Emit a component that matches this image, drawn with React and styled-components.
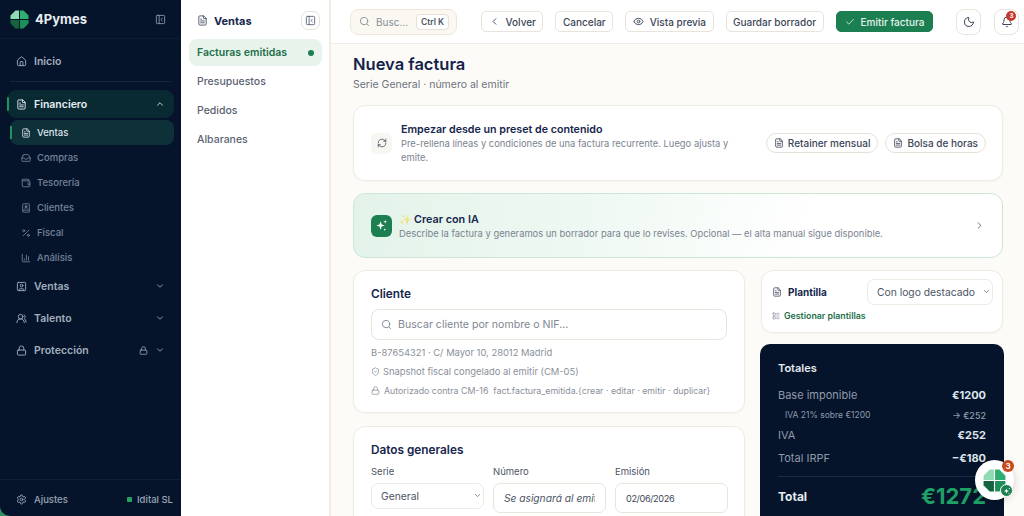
import React from 'react';
import styled, { createGlobalStyle } from 'styled-components';
import {
  House, FileText, Inbox, Wallet, BookUser, Percent, ChartColumn, ChevronDown, ChevronUp,
  SquareUser, UsersRound, Lock, Settings, Search, ChevronLeft, ChevronRight, Eye, Check, Moon, Bell,
  RefreshCw, ShieldCheck, PanelLeftClose, LayoutList,
} from 'lucide-react';

const GlobalStyle = createGlobalStyle`
  * { box-sizing: border-box; }
  html, body { margin: 0; height: 100%; overflow: hidden; }
  body { font-family: Inter, "Noto Sans", sans-serif; background: #fdfbf7; }
`;

const Shell = styled.div`
  display: flex;
  width: 1024px;
  height: 516px;
  overflow: hidden;
  position: relative;
  background: #2f8f63;
`;

const Sidebar = styled.aside`
  width: 181px;
  flex: none;
  display: flex;
  flex-direction: column;
  background: #05142b;
  color: #a8b3c2;
  border-bottom-left-radius: 10px;
`;

const Brand = styled.div`
  height: 39px;
  display: flex;
  align-items: center;
  gap: 6px;
  padding: 0 15px 0 10px;
  border-bottom: 1px solid #0b1c35;
`;

const BrandName = styled.span`
  flex: 1;
  font-size: 13px;
  font-weight: 700;
  color: #e8edf2;
`;

const Nav = styled.nav`
  flex: 1;
  display: flex;
  flex-direction: column;
  padding-top: 9px;
`;

const NavRow = styled.div`
  height: 26px;
  display: flex;
  align-items: center;
  gap: 7px;
  margin: 0 7px 6px;
  padding: 0 9px 0 9px;
  font-size: 10.5px;
  font-weight: 600;
  color: #a3aebd;
`;

const NavLabel = styled.span`
  flex: 1;
`;

const Divider = styled.div`
  height: 1px;
  margin: 1px 10px 8px;
  background: #14263f;
`;

const GroupRow = styled(NavRow)`
  position: relative;
  height: 28px;
  margin-bottom: 2px;
  border-radius: 9px;
  background: #0a2a33;
  color: #e8edf2;
  &::before {
    content: '';
    position: absolute;
    left: 0;
    top: 7px;
    bottom: 7px;
    width: 2px;
    border-radius: 2px;
    background: #22935f;
  }
`;

const SubRow = styled.div`
  position: relative;
  height: 25px;
  display: flex;
  align-items: center;
  gap: 6px;
  margin-left: 10px;
  margin-right: 7px;
  padding-left: 11px;
  border-radius: 8px;
  font-size: 9.5px;
  font-weight: 500;
  color: ${(p) => (p.$active ? '#dfe6ec' : '#77839a')};
  background: ${(p) => (p.$active ? '#0e3038' : 'transparent')};
  ${(p) => p.$active && `
    &::before {
      content: '';
      position: absolute;
      left: 0;
      top: 6px;
      bottom: 6px;
      width: 2px;
      background: #22935f;
    }
  `}
`;

const SubList = styled.div`
  display: flex;
  flex-direction: column;
  margin-bottom: 3px;
`;

const NavFooter = styled.div`
  height: 37px;
  display: flex;
  align-items: center;
  gap: 7px;
  padding: 2px 8px 0 16px;
  border-top: 1px solid #0f2039;
  font-size: 9.5px;
  font-weight: 500;
  color: #9aa6b6;
`;

const StatusDot = styled.i`
  width: 5px;
  height: 5px;
  margin-right: -2px;
  border-radius: 1px;
  background: #27a060;
`;

const SubNav = styled.aside`
  width: 150px;
  flex: none;
  padding: 0 7px 0 8px;
  background: #fff;
  border-right: 2px solid #f2ece3;
`;

const SubNavHead = styled.div`
  height: 39px;
  display: flex;
  align-items: center;
  gap: 6px;
  padding: 2px 2px 0 8px;
  font-size: 11px;
  font-weight: 700;
  color: #16264d;
`;

const SubNavTitle = styled.span`
  flex: 1;
`;

const IconBox = styled.span`
  width: 19px;
  height: 19px;
  display: flex;
  align-items: center;
  justify-content: center;
  border: 1px solid #e6e2da;
  border-radius: 7px;
  color: #5f6878;
`;

const SubNavItem = styled.div`
  height: 27px;
  margin-bottom: 2px;
  display: flex;
  align-items: center;
  justify-content: space-between;
  padding: 0 8px;
  border-radius: 8px;
  font-size: 10.5px;
  font-weight: ${(p) => (p.$active ? 600 : 500)};
  color: ${(p) => (p.$active ? '#1d6f4b' : '#5a6372')};
  background: ${(p) => (p.$active ? '#e8f3ec' : 'transparent')};
`;

const GreenDot = styled.i`
  width: 6px;
  height: 6px;
  border-radius: 50%;
  background: #1b7f52;
`;

const Main = styled.main`
  flex: 1;
  min-width: 0;
  display: flex;
  flex-direction: column;
  background: #fdfbf7;
`;

const TopBar = styled.header`
  height: 44px;
  flex: none;
  display: flex;
  align-items: center;
  padding: 0 4px 0 19px;
  background: #fff;
  border-bottom: 1px solid #f0ece5;
`;

const SearchBox = styled.div`
  width: 107px;
  height: 26px;
  flex: none;
  display: flex;
  align-items: center;
  gap: 6px;
  margin-right: 24px;
  padding: 0 7px 0 8px;
  border: 1px solid #eee7db;
  border-radius: 8px;
  background: #fbf8f2;
  font-size: 10px;
  color: #868d99;
`;

const Kbd = styled.kbd`
  margin-left: auto;
  padding: 2px 4px;
  border: 1px solid #e5e1d9;
  border-radius: 4px;
  background: #fff;
  font-family: inherit;
  font-size: 8.5px;
  font-weight: 600;
  color: #4c5565;
  white-space: nowrap;
`;

const Button = styled.button`
  height: 21px;
  flex: none;
  display: inline-flex;
  align-items: center;
  gap: 6px;
  margin-right: 12px;
  padding: 0 ${(p) => (p.$primary ? 8 : 6.5)}px;
  border: 1px solid ${(p) => (p.$primary ? '#1b7f52' : '#e8e4dc')};
  border-radius: 5px;
  background: ${(p) => (p.$primary ? '#1b7f52' : '#fff')};
  color: ${(p) => (p.$primary ? '#e6f3ec' : '#3c4657')};
  font-family: inherit;
  font-size: 10px;
  font-weight: 500;
  white-space: nowrap;
`;

const RoundButton = styled.button`
  position: relative;
  width: 25px;
  height: 26px;
  flex: none;
  display: flex;
  align-items: center;
  justify-content: center;
  padding: 0;
  margin-left: ${(p) => p.$gap}px;
  border: 1px solid #e8e4dc;
  border-radius: 8px;
  background: #fff;
  color: #3c4657;
`;

const BellBadge = styled.span`
  position: absolute;
  top: 1px;
  right: 2px;
  width: 10px;
  height: 10px;
  border-radius: 50%;
  background: #c8372d;
  color: #fff;
  font-size: 6.5px;
  font-weight: 700;
  line-height: 10px;
  text-align: center;
`;

const Content = styled.div`
  flex: 1;
  min-height: 0;
  overflow: hidden;
  padding: 10px 21px 0 22px;
`;

const PageTitle = styled.h1`
  margin: 0;
  font-size: 16.5px;
  line-height: 20px;
  font-weight: 600;
  color: #14234b;
`;

const PageSub = styled.p`
  margin: 4px 0 13px;
  font-size: 10.5px;
  line-height: 14px;
  color: #6c7480;
`;

const Card = styled.section`
  background: #fff;
  border: 1px solid #efeae2;
  border-radius: 12px;
  box-shadow: 0 1px 2px rgba(60, 50, 30, 0.04);
`;

const PresetCard = styled(Card)`
  height: 76px;
  display: flex;
  align-items: center;
  gap: 9px;
  margin-bottom: 12px;
  padding: 0 16px 0 17px;
`;

const PresetIcon = styled.span`
  width: 21px;
  height: 21px;
  flex: none;
  display: flex;
  align-items: center;
  justify-content: center;
  border-radius: 6px;
  background: #f8f6f1;
  color: #4c5565;
`;

const PresetText = styled.div`
  flex: 1;
  min-width: 0;
  padding: 1px 26px 0 0;
`;

const CardHeading = styled.div`
  font-size: 10.7px;
  line-height: 14px;
  font-weight: 600;
  color: #16264d;
`;

const AiHeading = styled(CardHeading)`
  display: flex;
  align-items: center;
  gap: 3px;
  font-size: 10.8px;
  line-height: 15px;
`;

const AiSpark = styled.span`
  font-size: 10px;
  opacity: 0.55;
`;

const CardHint = styled.div`
  font-size: 9.4px;
  line-height: 14px;
  color: #7b838f;
`;

const Pill = styled.span`
  height: 20px;
  flex: none;
  display: inline-flex;
  align-items: center;
  gap: 4px;
  margin-left: -2px;
  padding: 0 7px;
  border: 1px solid #e5e1d9;
  border-radius: 10px;
  background: #fff;
  font-size: 10px;
  font-weight: 500;
  color: #3c4657;
`;

const AiCard = styled.section`
  height: 65px;
  display: flex;
  align-items: center;
  gap: 7px;
  margin-bottom: 12px;
  padding: 0 17px;
  border: 1px solid #c9e6d7;
  border-radius: 12px;
  background: linear-gradient(100deg, #e3f3ea 0%, #eef8f2 35%, #fff 70%);
`;

const AiIcon = styled.span`
  width: 21px;
  height: 22px;
  flex: none;
  display: flex;
  align-items: center;
  justify-content: center;
  border-radius: 6px;
  background: #1b7f52;
  color: #fff;
`;

const AiText = styled.div`
  flex: 1;
  min-width: 0;
  padding-top: 2px;
`;

const Columns = styled.div`
  display: grid;
  grid-template-columns: 392px 242px;
  column-gap: 16px;
  align-items: start;
`;

const Stack = styled.div`
  display: flex;
  flex-direction: column;
`;

const ClientCard = styled(Card)`
  height: 143px;
  margin-bottom: 13px;
  padding: 15px 17px 0;
`;

const SectionTitle = styled.h2`
  margin: 0;
  font-size: 11.8px;
  line-height: 16px;
  font-weight: 600;
  color: #16264d;
`;

const ClientSearch = styled.div`
  height: 31px;
  display: flex;
  align-items: center;
  gap: 6px;
  margin: 7px 0 3px;
  padding: 0 9px;
  border: 1px solid #e8e4dc;
  border-radius: 8px;
  font-size: 10.6px;
  color: #7f8692;
`;

const MetaLine = styled.div`
  height: 19px;
  display: flex;
  align-items: center;
  gap: ${(p) => (p.$small ? 4 : 3)}px;
  font-size: ${(p) => (p.$small ? '8.8px' : '9.4px')};
  color: #8a909a;
  white-space: nowrap;
`;

const DataCard = styled(Card)`
  height: 200px;
  padding: 15px 17px 0;
`;

const FieldGrid = styled.div`
  display: grid;
  grid-template-columns: repeat(3, 113px);
  column-gap: 9px;
  margin-top: 8px;
`;

const Field = styled.label`
  display: flex;
  flex-direction: column;
  align-items: stretch;
  gap: 5px;
  font-size: 9.5px;
  line-height: 12px;
  color: #4c5565;
`;

const SelectWrap = styled.div`
  position: relative;
  color: #5f6878;
  svg {
    position: absolute;
    right: 2px;
    top: 8px;
    pointer-events: none;
  }
`;

const TemplateSelectWrap = styled(SelectWrap)`
  width: 126px;
  margin-left: auto;
`;

const Select = styled.select`
  width: 100%;
  height: 26px;
  display: block;
  padding: 0 9px;
  appearance: none;
  border: 1px solid #eeeae3;
  border-radius: 7px;
  background: #fff;
  font-family: inherit;
  font-size: 10.3px;
  color: #4c5565;
`;

const TextInput = styled.input`
  height: 30px;
  width: 100%;
  padding: 0 10px;
  border: 1px solid #e8e4dc;
  border-radius: 7px;
  background: #fff;
  font-family: inherit;
  font-size: 10.2px;
  color: #3c4657;
  &::placeholder {
    font-style: italic;
    color: #4c5565;
    opacity: 1;
  }
`;

const DateInput = styled(TextInput)`
  font-size: 9.2px;
  letter-spacing: -0.4px;
`;

const TemplateCard = styled(Card)`
  height: 63px;
  margin-bottom: 11px;
  padding: 8px 9px 0 10px;
`;

const TemplateRow = styled.div`
  display: flex;
  align-items: center;
  gap: 6px;
  font-size: 10px;
  font-weight: 700;
  color: #16264d;
`;

const TemplateLink = styled.div`
  display: flex;
  align-items: center;
  gap: 4px;
  margin-top: 5px;
  font-size: 8.8px;
  line-height: 11px;
  font-weight: 600;
  color: #1d6f4b;
`;

const TotalsCard = styled.section`
  height: 200px;
  margin: 0 -1px;
  padding: 17px 18px 0;
  border-radius: 10px 10px 0 0;
  background: #05142b;
  color: #8f9aa9;
`;

const TotalsTitle = styled.div`
  margin-bottom: 9px;
  font-size: 11px;
  line-height: 14px;
  font-weight: 600;
  color: #e6ebf0;
`;

const TotalRow = styled.div`
  display: flex;
  align-items: center;
  justify-content: space-between;
  height: ${(p) => p.$h || 22}px;
  padding-left: ${(p) => (p.$sub ? '7px' : 0)};
  font-size: ${(p) => (p.$sub ? '8.5px' : '11px')};
`;

const TotalValue = styled.b`
  font-size: ${(p) => (p.$sub ? '9px' : 'inherit')};
  font-weight: ${(p) => (p.$sub ? 500 : 700)};
  color: ${(p) => (p.$sub ? '#8f9aa9' : '#dfe5eb')};
`;

const GrandTotal = styled.div`
  display: flex;
  align-items: center;
  justify-content: space-between;
  margin-top: 6px;
  padding-top: 6px;
  border-top: 1px solid #1b2b44;
  font-size: 12px;
  font-weight: 700;
  color: #e6ebf0;
`;

const GrandValue = styled.span`
  font-size: 22px;
  line-height: 26px;
  font-weight: 700;
  color: #1fa065;
`;

const Fab = styled.div`
  position: absolute;
  left: 975px;
  top: 460px;
  width: 39px;
  height: 40px;
  display: flex;
  align-items: center;
  justify-content: center;
  border-radius: 50%;
  background: #fff;
  box-shadow: 0 2px 8px rgba(0, 0, 0, 0.18);
`;

const FabBadge = styled.span`
  position: absolute;
  top: 0;
  right: 0;
  width: 12px;
  height: 12px;
  border-radius: 50%;
  background: #c9481c;
  color: #fff;
  font-size: 8px;
  font-weight: 700;
  line-height: 12px;
  text-align: center;
`;

const FabMini = styled.span`
  position: absolute;
  right: 1px;
  bottom: 3px;
  width: 13px;
  height: 13px;
  display: flex;
  align-items: center;
  justify-content: center;
  border: 1px solid #fff;
  border-radius: 50%;
  background: #1b7f52;
`;

const Logo = ({ size = 19 }) => (
  <svg width={size} height={size} viewBox="0 0 20 20">
    <path d="M9.5 0.5H5.8L0.5 5.8V9.5H9.5Z" fill="#8fdcb4" />
    <path d="M10.5 0.5H14.2L19.5 5.8V9.5H10.5Z" fill="#2fae72" />
    <path d="M0.5 10.5H9.5V19.5H5.8L0.5 14.2Z" fill="#14653f" />
    <path d="M10.5 10.5H19.5V14.2L14.2 19.5H10.5Z" fill="#1f8f5a" />
  </svg>
);

const Stars = ({ size = 13 }) => (
  <svg width={size} height={size} viewBox="0 0 14 14" fill="#fff">
    <path d="M6 2.5 7.2 5.8 10.5 7 7.2 8.2 6 11.5 4.8 8.2 1.5 7 4.8 5.8Z" />
    <path d="M11 1 11.5 2.5 13 3 11.5 3.5 11 5 10.5 3.5 9 3 10.5 2.5Z" />
    <path d="M10.5 10 10.9 11.1 12 11.5 10.9 11.9 10.5 13 10.1 11.9 9 11.5 10.1 11.1Z" />
  </svg>
);

const subItems = [
  { label: 'Ventas', icon: FileText, active: true },
  { label: 'Compras', icon: Inbox },
  { label: 'Tesorería', icon: Wallet },
  { label: 'Clientes', icon: BookUser },
  { label: 'Fiscal', icon: Percent },
  { label: 'Análisis', icon: ChartColumn },
];

export default function App() {
  return (
    <Shell>
      <GlobalStyle />
      <Sidebar>
        <Brand>
          <Logo />
          <BrandName>4Pymes</BrandName>
          <PanelLeftClose size={11} color="#8a96a8" />
        </Brand>
        <Nav>
          <NavRow>
            <House size={11} />
            <NavLabel>Inicio</NavLabel>
          </NavRow>
          <Divider />
          <GroupRow>
            <FileText size={11} />
            <NavLabel>Financiero</NavLabel>
            <ChevronUp size={10} />
          </GroupRow>
          <SubList>
            {subItems.map(({ label, icon: Icon, active }) => (
              <SubRow key={label} $active={active}>
                <Icon size={10} />
                {label}
              </SubRow>
            ))}
          </SubList>
          <NavRow>
            <SquareUser size={11} />
            <NavLabel>Ventas</NavLabel>
            <ChevronDown size={10} />
          </NavRow>
          <NavRow>
            <UsersRound size={11} />
            <NavLabel>Talento</NavLabel>
            <ChevronDown size={10} />
          </NavRow>
          <NavRow>
            <Lock size={11} />
            <NavLabel>Protección</NavLabel>
            <Lock size={9} />
            <ChevronDown size={10} />
          </NavRow>
        </Nav>
        <NavFooter>
          <Settings size={11} />
          <NavLabel>Ajustes</NavLabel>
          <StatusDot />
          <span>Idital SL</span>
        </NavFooter>
      </Sidebar>

      <SubNav>
        <SubNavHead>
          <FileText size={11} color="#4c5565" />
          <SubNavTitle>Ventas</SubNavTitle>
          <IconBox>
            <PanelLeftClose size={11} />
          </IconBox>
        </SubNavHead>
        <SubNavItem $active>
          Facturas emitidas
          <GreenDot />
        </SubNavItem>
        <SubNavItem>Presupuestos</SubNavItem>
        <SubNavItem>Pedidos</SubNavItem>
        <SubNavItem>Albaranes</SubNavItem>
      </SubNav>

      <Main>
        <TopBar>
          <SearchBox>
            <Search size={11} />
            Busc...
            <Kbd>Ctrl K</Kbd>
          </SearchBox>
          <Button>
            <ChevronLeft size={11} />
            Volver
          </Button>
          <Button>Cancelar</Button>
          <Button>
            <Eye size={11} />
            Vista previa
          </Button>
          <Button>Guardar borrador</Button>
          <Button $primary>
            <Check size={10} />
            Emitir factura
          </Button>
          <RoundButton $gap={11}>
            <Moon size={12} />
          </RoundButton>
          <RoundButton $gap={13}>
            <Bell size={12} />
            <BellBadge>3</BellBadge>
          </RoundButton>
        </TopBar>
        <Content>
          <PageTitle>Nueva factura</PageTitle>
          <PageSub>Serie General · número al emitir</PageSub>

          <PresetCard>
            <PresetIcon>
              <RefreshCw size={10} />
            </PresetIcon>
            <PresetText>
              <CardHeading>Empezar desde un preset de contenido</CardHeading>
              <CardHint>Pre-rellena líneas y condiciones de una factura recurrente. Luego ajusta y emite.</CardHint>
            </PresetText>
            <Pill>
              <FileText size={10} />
              Retainer mensual
            </Pill>
            <Pill>
              <FileText size={10} />
              Bolsa de horas
            </Pill>
          </PresetCard>

          <AiCard>
            <AiIcon>
              <Stars />
            </AiIcon>
            <AiText>
              <AiHeading>
                <AiSpark>✨</AiSpark>
                Crear con IA
              </AiHeading>
              <CardHint>Describe la factura y generamos un borrador para que lo revises. Opcional — el alta manual sigue disponible.</CardHint>
            </AiText>
            <ChevronRight size={11} color="#5a6372" />
          </AiCard>

          <Columns>
            <Stack>
              <ClientCard>
                <SectionTitle>Cliente</SectionTitle>
                <ClientSearch>
                  <Search size={11} />
                  Buscar cliente por nombre o NIF...
                </ClientSearch>
                <MetaLine>B-87654321 · C/ Mayor 10, 28012 Madrid</MetaLine>
                <MetaLine>
                  <ShieldCheck size={9} />
                  Snapshot fiscal congelado al emitir (CM-05)
                </MetaLine>
                <MetaLine $small>
                  <Lock size={9} />
                  Autorizado contra CM-16&nbsp; fact.factura_emitida.{'{'}crear · editar · emitir · duplicar{'}'}
                </MetaLine>
              </ClientCard>
              <DataCard>
                <SectionTitle>Datos generales</SectionTitle>
                <FieldGrid>
                  <Field>
                    Serie
                    <SelectWrap>
                      <Select defaultValue="General">
                        <option>General</option>
                      </Select>
                      <ChevronDown size={9} />
                    </SelectWrap>
                  </Field>
                  <Field>
                    Número
                    <TextInput placeholder="Se asignará al emitir" readOnly />
                  </Field>
                  <Field>
                    Emisión
                    <DateInput defaultValue="02/06/2026" readOnly />
                  </Field>
                </FieldGrid>
              </DataCard>
            </Stack>
            <Stack>
              <TemplateCard>
                <TemplateRow>
                  <FileText size={10} color="#4c5565" />
                  Plantilla
                  <TemplateSelectWrap>
                    <Select defaultValue="Con logo destacado">
                      <option>Con logo destacado</option>
                    </Select>
                    <ChevronDown size={9} />
                  </TemplateSelectWrap>
                </TemplateRow>
                <TemplateLink>
                  <LayoutList size={8} color="#8a909a" />
                  Gestionar plantillas
                </TemplateLink>
              </TemplateCard>
              <TotalsCard>
                <TotalsTitle>Totales</TotalsTitle>
                <TotalRow>
                  Base imponible
                  <TotalValue>€1200</TotalValue>
                </TotalRow>
                <TotalRow $sub $h={18}>
                  IVA 21% sobre €1200
                  <TotalValue $sub>→ €252</TotalValue>
                </TotalRow>
                <TotalRow>
                  IVA
                  <TotalValue>€252</TotalValue>
                </TotalRow>
                <TotalRow $h={24}>
                  Total IRPF
                  <TotalValue>−€180</TotalValue>
                </TotalRow>
                <GrandTotal>
                  Total
                  <GrandValue>€1272</GrandValue>
                </GrandTotal>
              </TotalsCard>
            </Stack>
          </Columns>
        </Content>
      </Main>

      <Fab>
        <Logo size={23} />
        <FabBadge>3</FabBadge>
        <FabMini>
          <Stars size={8} />
        </FabMini>
      </Fab>
    </Shell>
  );
}
